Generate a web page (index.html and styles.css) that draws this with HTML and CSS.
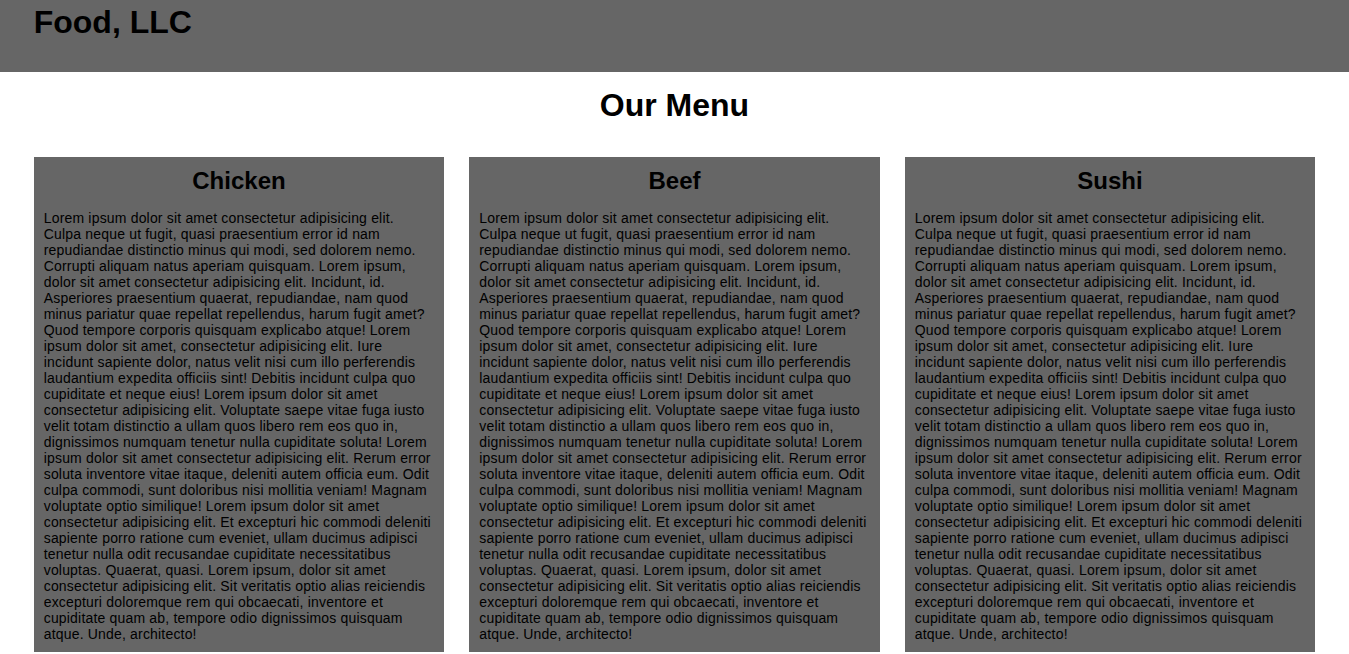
FILE: index.html
```html
<!DOCTYPE html>
<html>
<head>
<meta charset="utf-8">
<title>Food, LLC</title>
<link rel="stylesheet" href="styles.css">
</head>
<body>
<header class="site-header">
  <div class="container">
    <h1 class="brand">Food, LLC</h1>
  </div>
</header>
<main class="container">
  <h1 class="page-title">Our Menu</h1>
  <div class="menu-grid">
    <section class="menu-item">
      <h2 class="menu-title">Chicken</h2>
      <p class="menu-text">Lorem ipsum dolor sit amet consectetur adipisicing elit. Culpa neque ut fugit, quasi praesentium error id nam repudiandae distinctio minus qui modi, sed dolorem nemo. Corrupti aliquam natus aperiam quisquam. Lorem ipsum, dolor sit amet consectetur adipisicing elit. Incidunt, id. Asperiores praesentium quaerat, repudiandae, nam quod minus pariatur quae repellat repellendus, harum fugit amet? Quod tempore corporis quisquam explicabo atque! Lorem ipsum dolor sit amet, consectetur adipisicing elit. Iure incidunt sapiente dolor, natus velit nisi cum illo perferendis laudantium expedita officiis sint! Debitis incidunt culpa quo cupiditate et neque eius! Lorem ipsum dolor sit amet consectetur adipisicing elit. Voluptate saepe vitae fuga iusto velit totam distinctio a ullam quos libero rem eos quo in, dignissimos numquam tenetur nulla cupiditate soluta! Lorem ipsum dolor sit amet consectetur adipisicing elit. Rerum error soluta inventore vitae itaque, deleniti autem officia eum. Odit culpa commodi, sunt doloribus nisi mollitia veniam! Magnam voluptate optio similique! Lorem ipsum dolor sit amet consectetur adipisicing elit. Et excepturi hic commodi deleniti sapiente porro ratione cum eveniet, ullam ducimus adipisci tenetur nulla odit recusandae cupiditate necessitatibus voluptas. Quaerat, quasi. Lorem ipsum, dolor sit amet consectetur adipisicing elit. Sit veritatis optio alias reiciendis excepturi doloremque rem qui obcaecati, inventore et cupiditate quam ab, tempore odio dignissimos quisquam atque. Unde, architecto!</p>
    </section>
    <section class="menu-item">
      <h2 class="menu-title">Beef</h2>
      <p class="menu-text">Lorem ipsum dolor sit amet consectetur adipisicing elit. Culpa neque ut fugit, quasi praesentium error id nam repudiandae distinctio minus qui modi, sed dolorem nemo. Corrupti aliquam natus aperiam quisquam. Lorem ipsum, dolor sit amet consectetur adipisicing elit. Incidunt, id. Asperiores praesentium quaerat, repudiandae, nam quod minus pariatur quae repellat repellendus, harum fugit amet? Quod tempore corporis quisquam explicabo atque! Lorem ipsum dolor sit amet, consectetur adipisicing elit. Iure incidunt sapiente dolor, natus velit nisi cum illo perferendis laudantium expedita officiis sint! Debitis incidunt culpa quo cupiditate et neque eius! Lorem ipsum dolor sit amet consectetur adipisicing elit. Voluptate saepe vitae fuga iusto velit totam distinctio a ullam quos libero rem eos quo in, dignissimos numquam tenetur nulla cupiditate soluta! Lorem ipsum dolor sit amet consectetur adipisicing elit. Rerum error soluta inventore vitae itaque, deleniti autem officia eum. Odit culpa commodi, sunt doloribus nisi mollitia veniam! Magnam voluptate optio similique! Lorem ipsum dolor sit amet consectetur adipisicing elit. Et excepturi hic commodi deleniti sapiente porro ratione cum eveniet, ullam ducimus adipisci tenetur nulla odit recusandae cupiditate necessitatibus voluptas. Quaerat, quasi. Lorem ipsum, dolor sit amet consectetur adipisicing elit. Sit veritatis optio alias reiciendis excepturi doloremque rem qui obcaecati, inventore et cupiditate quam ab, tempore odio dignissimos quisquam atque. Unde, architecto!</p>
    </section>
    <section class="menu-item">
      <h2 class="menu-title">Sushi</h2>
      <p class="menu-text">Lorem ipsum dolor sit amet consectetur adipisicing elit. Culpa neque ut fugit, quasi praesentium error id nam repudiandae distinctio minus qui modi, sed dolorem nemo. Corrupti aliquam natus aperiam quisquam. Lorem ipsum, dolor sit amet consectetur adipisicing elit. Incidunt, id. Asperiores praesentium quaerat, repudiandae, nam quod minus pariatur quae repellat repellendus, harum fugit amet? Quod tempore corporis quisquam explicabo atque! Lorem ipsum dolor sit amet, consectetur adipisicing elit. Iure incidunt sapiente dolor, natus velit nisi cum illo perferendis laudantium expedita officiis sint! Debitis incidunt culpa quo cupiditate et neque eius! Lorem ipsum dolor sit amet consectetur adipisicing elit. Voluptate saepe vitae fuga iusto velit totam distinctio a ullam quos libero rem eos quo in, dignissimos numquam tenetur nulla cupiditate soluta! Lorem ipsum dolor sit amet consectetur adipisicing elit. Rerum error soluta inventore vitae itaque, deleniti autem officia eum. Odit culpa commodi, sunt doloribus nisi mollitia veniam! Magnam voluptate optio similique! Lorem ipsum dolor sit amet consectetur adipisicing elit. Et excepturi hic commodi deleniti sapiente porro ratione cum eveniet, ullam ducimus adipisci tenetur nulla odit recusandae cupiditate necessitatibus voluptas. Quaerat, quasi. Lorem ipsum, dolor sit amet consectetur adipisicing elit. Sit veritatis optio alias reiciendis excepturi doloremque rem qui obcaecati, inventore et cupiditate quam ab, tempore odio dignissimos quisquam atque. Unde, architecto!</p>
    </section>
  </div>
</main>
</body>
</html>
```

FILE: styles.css
```css
html, body {
  margin: 0;
  padding: 0;
  background: #ffffff;
  color: #000000;
  font-family: "Liberation Sans", Arial, sans-serif;
}

.container {
  width: 95%;
  margin: 0 auto;
}

.site-header {
  background: #666666;
  height: 72px;
  box-sizing: border-box;
  padding-top: 4px;
}

.brand {
  margin: 0;
  font-size: 32px;
  font-weight: bold;
}

.page-title {
  margin: 15px 0 33px;
  font-size: 32px;
  font-weight: bold;
  text-align: center;
}

.menu-grid {
  display: grid;
  grid-template-columns: repeat(3, 1fr);
  column-gap: 25px;
}

.menu-item {
  background: #666666;
  padding: 10px 10px 10px;
}

.menu-title {
  margin: 0;
  font-size: 24px;
  font-weight: bold;
  text-align: center;
}

.menu-text {
  margin: 15px 0 0;
  font-size: 14px;
  line-height: 16px;
  letter-spacing: 0.18px;
}
```
